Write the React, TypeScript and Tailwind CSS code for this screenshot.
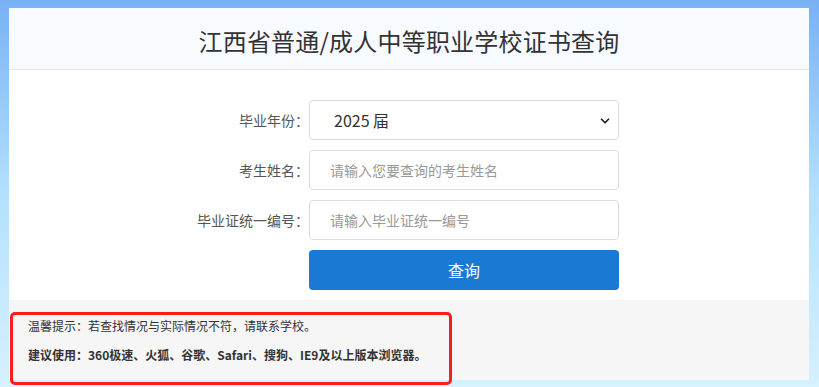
import { ChevronDown } from 'lucide-react';

const font = { fontFamily: '"Noto Sans CJK SC", "Noto Sans", sans-serif' };

function Row({ label, children }: { label: string; children: React.ReactNode }) {
  return (
    <div className="flex items-center h-10">
      <label className="w-[300px] text-right text-[14px] text-[#555]">{label}</label>
      <div className="w-[310px] h-10">{children}</div>
    </div>
  );
}

export default function App() {
  return (
    <div
      className="relative h-[387px] w-[819px] overflow-hidden bg-gradient-to-b from-[#78b2f5] via-[#b3e0fd] to-[#d6f1ff] pt-2 pl-[9px] pr-[10px]"
      style={font}
    >
      <div className="w-[800px] bg-white">
        <div className="h-[62px] flex items-center justify-center bg-[#f7faff] border-b border-[#dfeaf8]">
          <h1 className="text-[24px] text-[#333] tracking-[0.2px] pt-1">江西省普通/成人中等职业学校证书查询</h1>
        </div>

        <div className="pt-[30px] pb-[10px] flex flex-col gap-[10px]">
          <Row label="毕业年份：">
            <div className="relative h-10 rounded border border-[#ddd] bg-white flex items-center pl-[24px] text-[16px] text-[#333]">
              2025 届
              <ChevronDown className="absolute right-[6px] top-[13px] w-[14px] h-[14px] text-[#222]" strokeWidth={3} />
            </div>
          </Row>
          <Row label="考生姓名：">
            <div className="h-10 rounded border border-[#ddd] bg-white flex items-center pl-[20px] text-[14px] text-[#999]">
              请输入您要查询的考生姓名
            </div>
          </Row>
          <Row label="毕业证统一编号：">
            <div className="h-10 rounded border border-[#ddd] bg-white flex items-center pl-[20px] text-[14px] text-[#999]">
              请输入毕业证统一编号
            </div>
          </Row>
          <Row label="">
            <button className="h-10 w-full rounded bg-[#1a79d3] text-white text-[16px]">查询</button>
          </Row>
        </div>

        <div className="h-[80px] bg-[#f6f6f6] pl-[19px] pt-[18px] text-[12px] text-[#333]">
          <p className="leading-[16px]">温馨提示：若查找情况与实际情况不符，请联系学校。</p>
          <p className="leading-[16px] mt-[13px] font-bold">建议使用：360极速、火狐、谷歌、Safari、搜狗、IE9及以上版本浏览器。</p>
        </div>
      </div>

      <div className="absolute left-[10px] top-[312px] w-[442px] h-[73px] rounded-[5px] border-[3px] border-[#ff1c1c]" />
    </div>
  );
}
